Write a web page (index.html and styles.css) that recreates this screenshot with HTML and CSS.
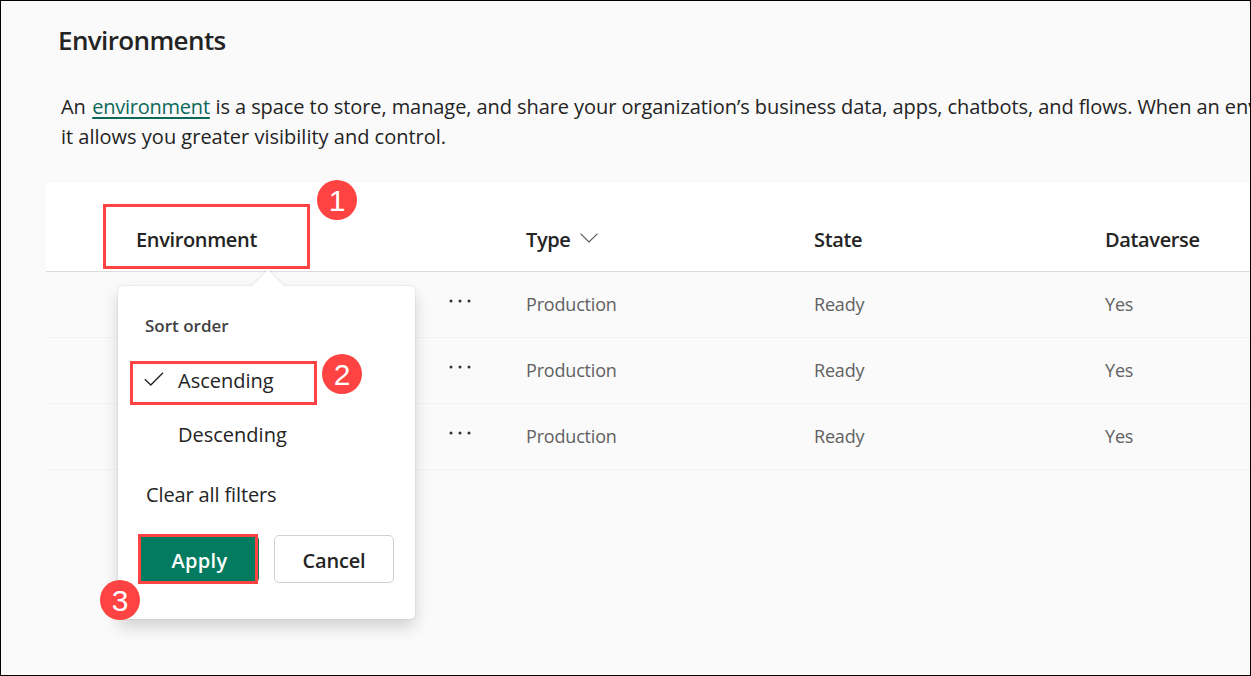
FILE: index.html
```html
<!DOCTYPE html>
<html lang="en">
<head>
<meta charset="utf-8">
<title>Environments</title>
<link rel="stylesheet" href="styles.css">
</head>
<body>
<main class="page">
  <h1 class="title">Environments</h1>
  <p class="intro"><span class="line">An <a class="link" href="#">environment</a> is a space to store, manage, and share your organization’s business data, apps, chatbots, and flows. When an env</span><br>it allows you greater visibility and control.</p>

  <section class="table">
    <div class="row head">
      <span>Environment</span>
      <span></span>
      <span class="type">Type
        <svg class="chevron" viewBox="0 0 18 10"><path d="M0.5 0.7 L9 9 L17.5 0.7"/></svg>
      </span>
      <span>State</span>
      <span>Dataverse</span>
    </div>
    <div class="row">
      <span></span>
      <svg class="dots" viewBox="0 0 22 4"><circle cx="2" cy="2" r="1.5"/><circle cx="11" cy="2" r="1.5"/><circle cx="20" cy="2" r="1.5"/></svg>
      <span>Production</span><span>Ready</span><span>Yes</span>
    </div>
    <div class="row">
      <span></span>
      <svg class="dots" viewBox="0 0 22 4"><circle cx="2" cy="2" r="1.5"/><circle cx="11" cy="2" r="1.5"/><circle cx="20" cy="2" r="1.5"/></svg>
      <span>Production</span><span>Ready</span><span>Yes</span>
    </div>
    <div class="row">
      <span></span>
      <svg class="dots" viewBox="0 0 22 4"><circle cx="2" cy="2" r="1.5"/><circle cx="11" cy="2" r="1.5"/><circle cx="20" cy="2" r="1.5"/></svg>
      <span>Production</span><span>Ready</span><span>Yes</span>
    </div>
  </section>

  <div class="popup">
    <svg class="beak" viewBox="0 0 34 17"><path d="M0 17 L15.5 1.5 Q17 0 18.5 1.5 L34 17 Z"/></svg>
    <div class="caption">Sort order</div>
    <div class="option">
      <svg class="check" viewBox="0 0 20 14"><path d="M0.8 7.2 L6.8 13 L19 0.8"/></svg>
      <span>Ascending</span>
    </div>
    <div class="option"><span></span><span>Descending</span></div>
    <div class="clear">Clear all filters</div>
    <div class="actions">
      <button class="btn primary">Apply</button>
      <button class="btn">Cancel</button>
    </div>
  </div>

  <div class="mark mark-header"></div>
  <div class="mark mark-option"></div>
  <div class="mark mark-apply"></div>
  <div class="step step-1">1</div>
  <div class="step step-2">2</div>
  <div class="step step-3">3</div>
</main>
</body>
</html>
```
FILE: styles.css
```css
* { box-sizing: border-box; }
body {
  margin: 0;
  font-family: "Open Sans", "Noto Sans", sans-serif;
  color: #242424;
}
.page {
  position: relative;
  width: 1251px;
  height: 676px;
  overflow: hidden;
  border: 1px solid #000;
  background: #fafafa;
}
.title {
  margin: 19px 0 0 57px;
  font-size: 26px;
  font-weight: 600;
  line-height: 40px;
  letter-spacing: -0.62px;
}
.intro {
  margin: 32px 0 0 60px;
  font-size: 20px;
  line-height: 30px;
  white-space: nowrap;
}
.line { letter-spacing: -0.075px; }
.link {
  margin: 0 0.5px 0 1.3px;
  color: #0c695a;
  letter-spacing: -0.23px;
  text-decoration: underline;
  text-decoration-thickness: 2px;
  text-underline-offset: 3px;
}
.table { margin: 31px 0 0 45px; }
.row {
  display: grid;
  grid-template-columns: 312px 78px 288px 291px 1fr;
  align-items: center;
  padding: 0 0 2px 90px;
  height: 66px;
  border-bottom: 1px solid #f3f3f3;
  font-size: 18px;
  letter-spacing: -0.18px;
  color: #616161;
}
.head {
  height: 89px;
  padding: 24px 0 0 90px;
  background: #fff;
  border-color: #dcdcdc;
  font-size: 20px;
  font-weight: 600;
  letter-spacing: -0.36px;
  color: #242424;
}
.type { display: flex; align-items: center; gap: 9px; }
.chevron { width: 18px; height: 10px; margin-top: -3px; fill: none; stroke: #555; stroke-width: 1.1; }
.dots { width: 22px; height: 4px; margin: -6px 0 0 1px; fill: #333; }
.popup {
  position: absolute;
  left: 117px;
  top: 285px;
  width: 297px;
  height: 333px;
  padding: 25px 20px 0;
  border-radius: 5px;
  background: #fff;
  box-shadow: 0 0 2px rgba(0,0,0,.14), 0 8px 16px rgba(0,0,0,.16);
  font-size: 20px;
}
.beak {
  position: absolute;
  left: 133px;
  top: -16px;
  width: 34px;
  height: 17px;
  fill: #fff;
  filter: drop-shadow(0 0 1.5px rgba(0,0,0,.14));
  clip-path: inset(-4px -4px 0 -4px);
}
.caption { padding-left: 7px; font-size: 17px; font-weight: 600; line-height: 30px; color: #424242; }
.option {
  display: grid;
  grid-template-columns: 34px auto;
  align-items: center;
  height: 54px;
  padding-left: 6px;
}
.caption + .option { margin-top: 12px; }
.check { width: 20px; height: 14px; margin-top: -3px; fill: none; stroke: #242424; stroke-width: 1.4; }
.clear { padding-left: 8px; height: 54px; line-height: 54px; margin-top: 7px; letter-spacing: -0.13px; }
.actions { display: flex; gap: 15px; margin-top: 13px; }
.btn {
  width: 120px;
  height: 48px;
  padding: 2px 0 0;
  border: 1px solid #d1d1d1;
  border-radius: 5px;
  background: #fff;
  font: 600 20px "Open Sans", "Noto Sans", sans-serif;
  letter-spacing: -0.2px;
  color: #242424;
}
.primary { width: 121px; padding-left: 2px; border-color: #037b60; background: #037b60; color: #fff; letter-spacing: 0.3px; }
.mark { position: absolute; border: 3px solid #ff4343; }
.mark-header { left: 102px; top: 203px; width: 207px; height: 65px; }
.mark-option { left: 129px; top: 360px; width: 187px; height: 44px; }
.mark-apply { left: 137px; top: 533px; width: 120px; height: 50px; }
.step {
  position: absolute;
  width: 40px;
  height: 40px;
  border-radius: 50%;
  background: #ff4343;
  color: #fff;
  font: 30px/42px "Liberation Sans", Arial, sans-serif;
  text-align: center;
}
.step-1 { left: 316px; top: 179px; }
.step-2 { left: 321px; top: 353px; }
.step-3 { left: 99px; top: 579px; }
```
